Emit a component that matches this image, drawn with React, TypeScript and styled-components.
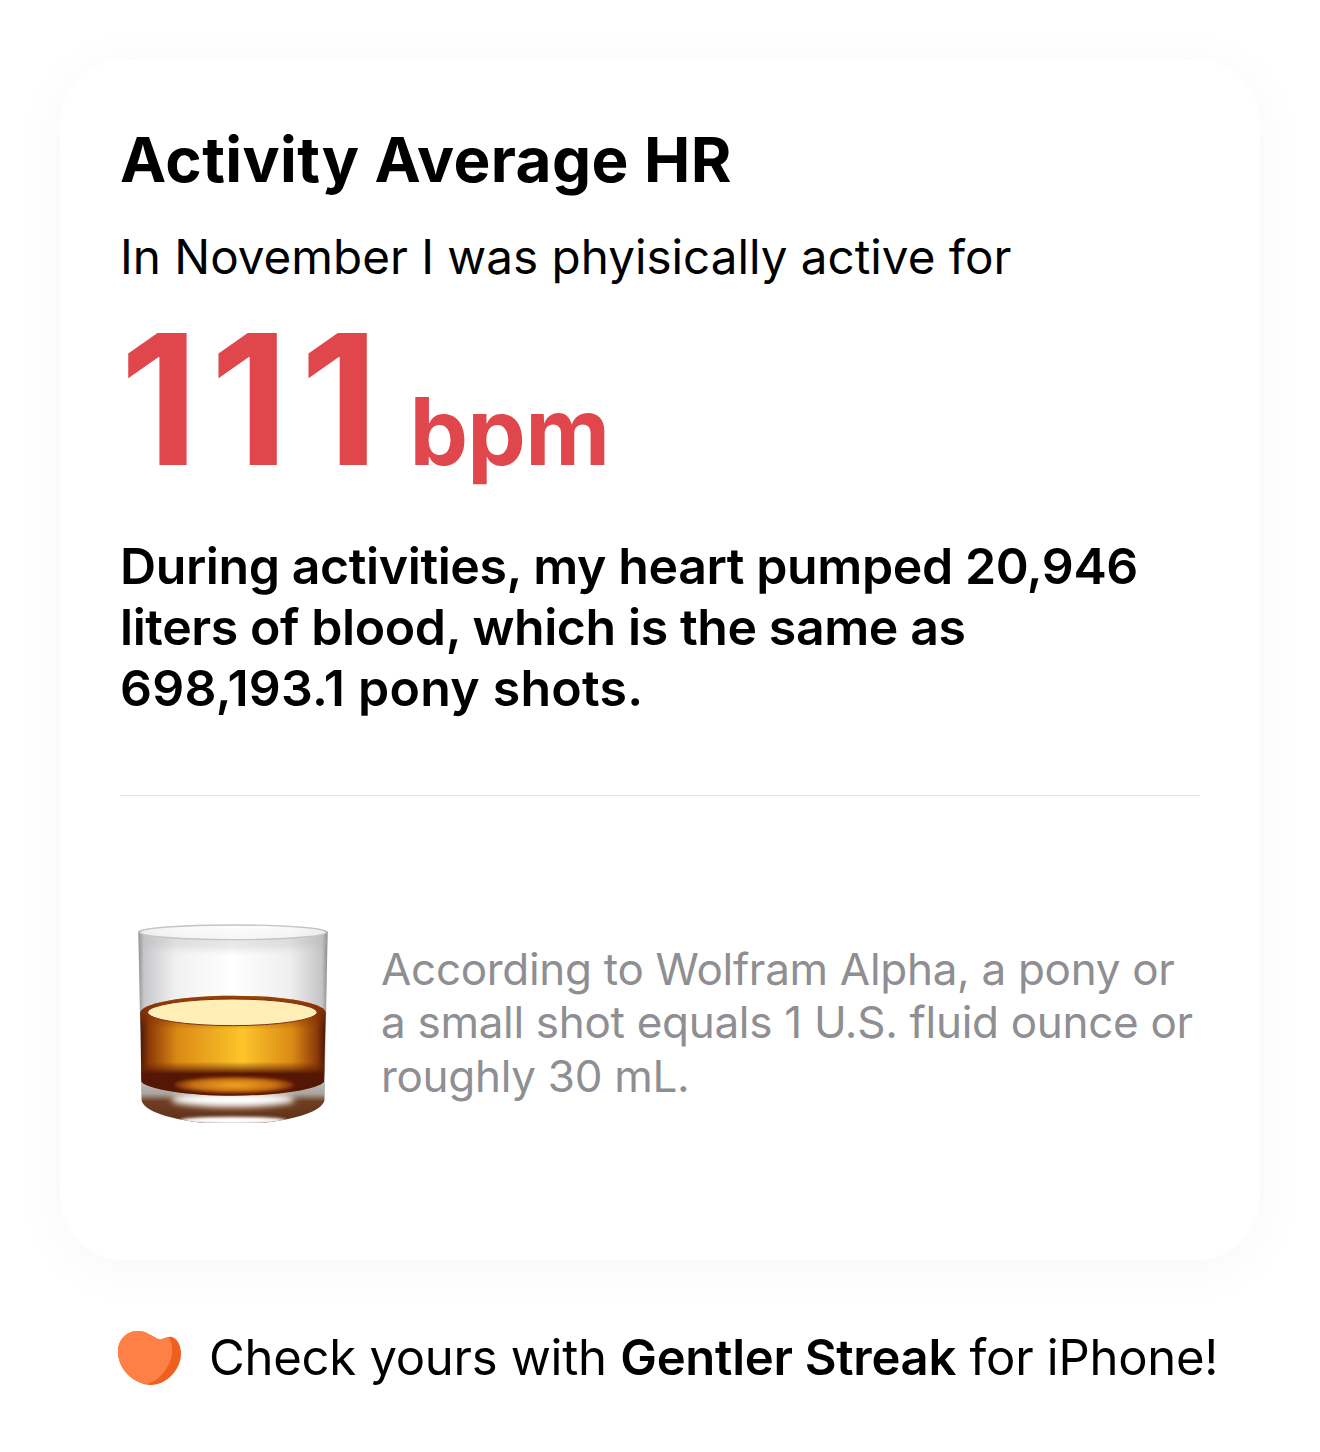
import React from "react";
import styled, { createGlobalStyle } from "styled-components";

const GlobalStyle = createGlobalStyle`
  html, body {
    margin: 0;
    padding: 0;
    background: #ffffff;
  }

  body {
    font-family: Inter, "Liberation Sans", sans-serif;
    color: #000000;
  }
`;

const GLASS_OUTLINE =
  "M54 68 C54 52 180 44 338 44 C496 44 622 52 622 68 L612 572 C606 612 480 644 338 644 C196 644 70 612 64 572 Z";
const LIQUID_OUTLINE =
  "M60 310 C60 280 190 258 338 258 C486 258 616 280 616 310 L611 516 C590 540 470 558 338 558 C206 558 86 540 63 516 Z";

const GlassIcon = () => (
  <GlassSvg viewBox="50 40 576 600">
    <defs>
      <clipPath id="glassClip">
        <path d={GLASS_OUTLINE} />
      </clipPath>
      <linearGradient id="wall" x1="0" y1="0" x2="1" y2="0">
        <stop offset="0" stopColor="#8f8f92" />
        <stop offset="0.03" stopColor="#c8c8ca" />
        <stop offset="0.2" stopColor="#f1f1f2" />
        <stop offset="0.5" stopColor="#ffffff" />
        <stop offset="0.8" stopColor="#efeff0" />
        <stop offset="0.97" stopColor="#c4c4c6" />
        <stop offset="1" stopColor="#8b8b8e" />
      </linearGradient>
      <linearGradient id="liquid" x1="0" y1="0" x2="1" y2="0">
        <stop offset="0" stopColor="#4f1707" />
        <stop offset="0.05" stopColor="#8f3c08" />
        <stop offset="0.2" stopColor="#da8a14" />
        <stop offset="0.55" stopColor="#fdc52b" />
        <stop offset="0.82" stopColor="#da8a14" />
        <stop offset="0.95" stopColor="#8f3c08" />
        <stop offset="1" stopColor="#4a1506" />
      </linearGradient>
      <linearGradient id="liquidDepth" x1="0" y1="0" x2="0" y2="1">
        <stop offset="0.12" stopColor="#8a3405" stopOpacity="0.9" />
        <stop offset="0.34" stopColor="#8a3405" stopOpacity="0" />
        <stop offset="0.66" stopColor="#7a2c05" stopOpacity="0" />
        <stop offset="0.78" stopColor="#551705" stopOpacity="1" />
      </linearGradient>
      <linearGradient id="base" x1="0" y1="0" x2="0" y2="1">
        <stop offset="0" stopColor="#c8c8ca" />
        <stop offset="0.35" stopColor="#a9a3a0" />
        <stop offset="0.5" stopColor="#6f3f22" />
        <stop offset="1" stopColor="#5a2c14" />
      </linearGradient>
      <radialGradient id="pool" cx="0.5" cy="0.5" r="0.5">
        <stop offset="0" stopColor="#f2a729" />
        <stop offset="0.7" stopColor="#c87012" />
        <stop offset="1" stopColor="#7a2d07" />
      </radialGradient>
      <filter id="soft" x="-20%" y="-60%" width="140%" height="220%">
        <feGaussianBlur stdDeviation="5" />
      </filter>
      <filter id="softer" x="-20%" y="-80%" width="140%" height="260%">
        <feGaussianBlur stdDeviation="9" />
      </filter>
    </defs>

    <path d={GLASS_OUTLINE} fill="url(#wall)" />

    <g clipPath="url(#glassClip)">
      {/* heavy base */}
      <rect x="50" y="500" width="576" height="150" fill="url(#base)" />
      <ellipse cx="338" cy="570" rx="185" ry="22" fill="#ffffff" filter="url(#softer)" />
      <ellipse cx="338" cy="632" rx="160" ry="11" fill="#ffffff" filter="url(#soft)" />

      {/* whisky */}
      <path d={LIQUID_OUTLINE} fill="url(#liquid)" />
      <path d={LIQUID_OUTLINE} fill="url(#liquidDepth)" />
      <ellipse cx="342" cy="526" rx="180" ry="25" fill="url(#pool)" filter="url(#soft)" />
      <ellipse cx="336" cy="308" rx="254" ry="40" fill="#ffefb6" stroke="#7c2f16" strokeWidth="3" />

      {/* top wall shade */}
      <ellipse cx="338" cy="92" rx="300" ry="30" fill="#b4b4b7" opacity="0.3" filter="url(#softer)" />
    </g>

    <ellipse cx="338" cy="68" rx="280" ry="22" fill="#fdfdfe" fillOpacity="0.7" stroke="#c4c3c7" strokeWidth="4" />
  </GlassSvg>
);

const StreakLogo = () => (
  <LogoSvg viewBox="0 0 66 56">
    <path d="M1 22 C1 9 10 1 21 1 C29 1 35 6 41 9 C45 11 49 6 55 7 C61 9 64 16 64 24 C64 40 49 55 34 55 C17 55 1 38 1 22 Z" fill="#ef5f1d" />
    <path d="M1 22 C1 9 10 1 21 1 C29 1 35 6 41 9 C44 10.500 47 8 51 7 C56 12 57 24 52 34 C46 46 38 52 30 54 C13 52 1 37 1 22 Z" fill="#ff8047" />
  </LogoSvg>
);

export default function App() {
  return (
    <Page>
      <GlobalStyle />
      <Card>
        <Title>Activity Average HR</Title>
        <Lead>In November I was phyisically active for</Lead>
        <Metric>
          <MetricValue>111</MetricValue>
          <MetricUnit>bpm</MetricUnit>
        </Metric>
        <Summary>
          During activities, my heart pumped 20,946
          <br />
          liters of blood, which is the same as
          <br />
          <SummaryTail>698,193.1 pony shots.</SummaryTail>
        </Summary>
        <Divider />
        <NoteRow>
          <GlassIcon />
          <NoteText>
            According to Wolfram Alpha, a pony or
            <br />
            a small shot equals 1 U.S. fluid ounce or
            <br />
            roughly 30 mL.
          </NoteText>
        </NoteRow>
      </Card>
      <Footer>
        <StreakLogo />
        <FooterText>
          Check yours with <strong>Gentler Streak</strong> for iPhone!
        </FooterText>
      </Footer>
    </Page>
  );
}

const Page = styled.div`
  width: 1320px;
  height: 1452px;
  padding: 60px;
  box-sizing: border-box;
  background: #ffffff;
  overflow: hidden;
`;

const Card = styled.section`
  width: 1200px;
  height: 1200px;
  box-sizing: border-box;
  padding: 64px 60px 0;
  border-radius: 64px;
  background: #ffffff;
  box-shadow: 0 8px 60px rgba(0, 0, 0, 0.035);
`;

const Title = styled.h1`
  margin: 0;
  font-size: 62px;
  line-height: 72px;
  font-weight: 700;
  letter-spacing: 0.4px;
`;

const Lead = styled.p`
  margin: 33px 0 0;
  font-size: 47.6px;
  line-height: 56px;
  font-weight: 400;
`;

const Metric = styled.div`
  display: flex;
  align-items: baseline;
  gap: 19px;
  margin-top: 29px;
  color: #e0474c;
  height: 171px;
`;

const MetricValue = styled.span`
  font-size: 182px;
  line-height: 170px;
  font-weight: 700;
  letter-spacing: 11.7px;
`;

const MetricUnit = styled.span`
  font-size: 93px;
  line-height: 90px;
  font-weight: 700;
  letter-spacing: -0.8px;
`;

const Summary = styled.p`
  margin: 51px 0 0;
  font-size: 50px;
  line-height: 61px;
  font-weight: 600;
  letter-spacing: -0.4px;
`;

const SummaryTail = styled.span`
  letter-spacing: 0.25px;
`;

const Divider = styled.hr`
  margin: 76px 0 0;
  border: 0;
  height: 1px;
  background: #e4e4e6;
`;

const NoteRow = styled.div`
  display: flex;
  align-items: center;
  gap: 52px;
  margin-top: 127px;
  padding-left: 17px;
`;

const GlassSvg = styled.svg`
  flex: none;
  width: 192px;
  height: 200px;
`;

const NoteText = styled.p`
  margin: 0;
  font-size: 44px;
  line-height: 53.5px;
  font-weight: 400;
  color: #8e8e93;
  letter-spacing: -0.3px;
`;

const Footer = styled.footer`
  display: flex;
  align-items: center;
  gap: 26px;
  margin-top: 68px;
  padding-left: 57px;
`;

const LogoSvg = styled.svg`
  flex: none;
  width: 66px;
  height: 56px;
`;

const FooterText = styled.p`
  margin: 0;
  font-size: 49px;
  line-height: 60px;
  font-weight: 400;
  letter-spacing: -0.27px;
  white-space: nowrap;

  strong {
    font-weight: 600;
  }
`;
